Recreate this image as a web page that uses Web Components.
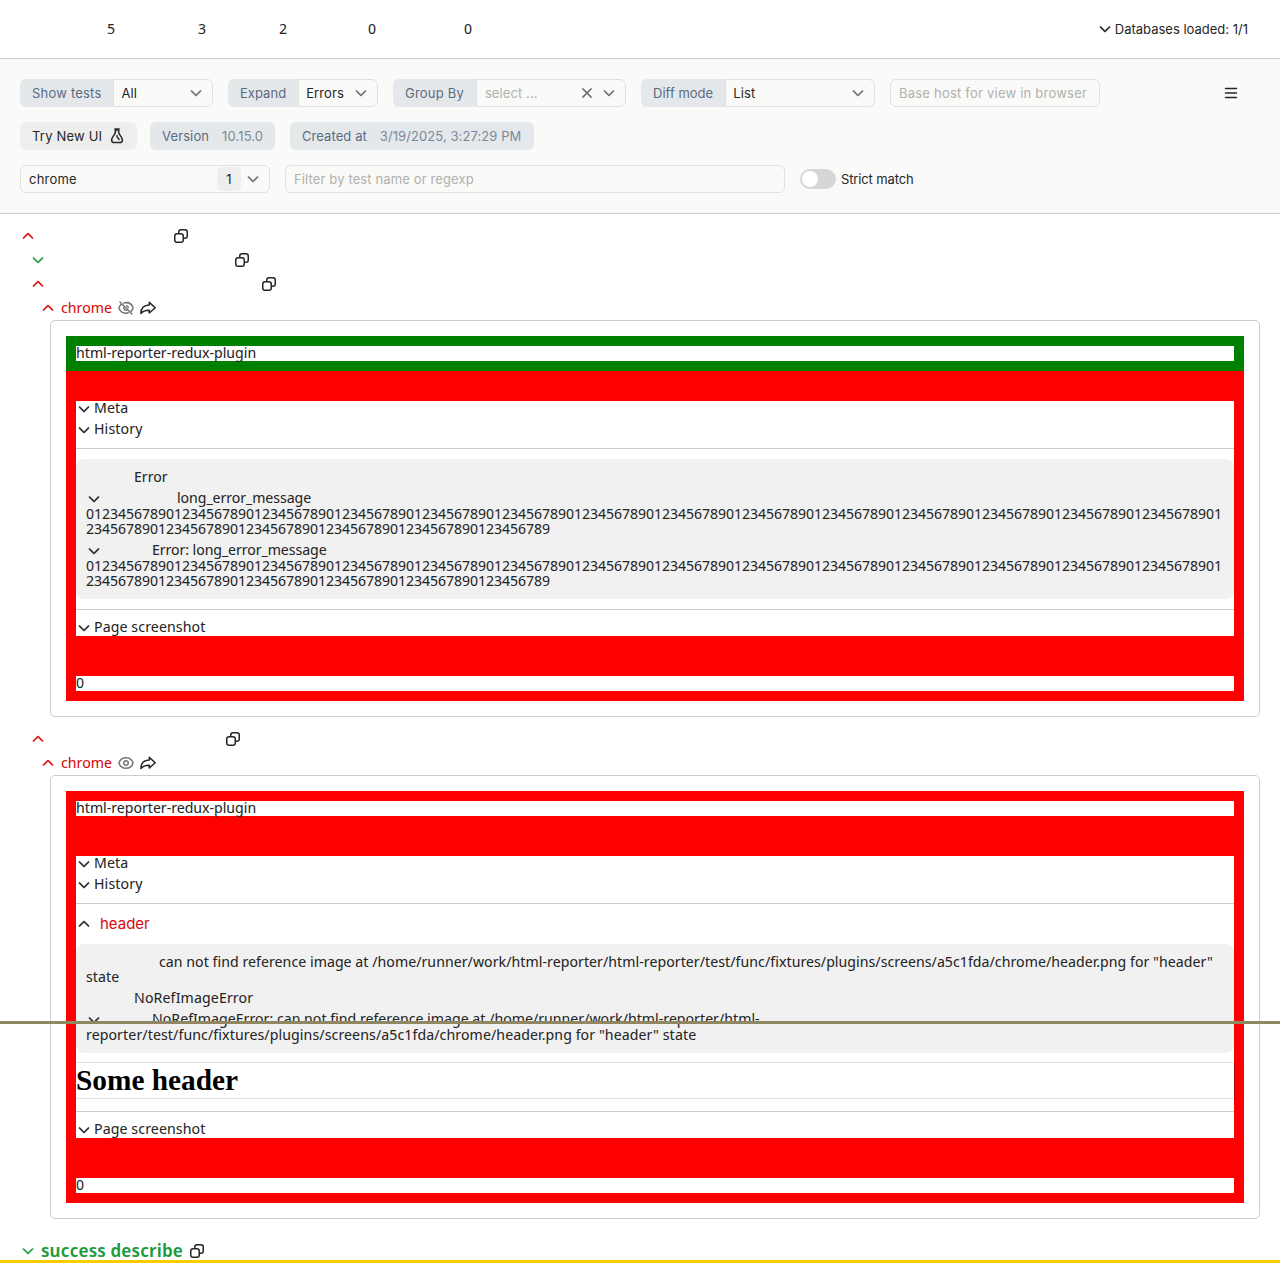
<!DOCTYPE html>
<html lang="en"><head><meta charset="utf-8"><title>HTML report</title>
<style>
body{margin:0;height:1263px;overflow:hidden;background:#fff;color:#262626;font:15px/15px "Noto Sans Display","Noto Sans",sans-serif}
</style></head><body>
<report-app></report-app>
<script>
const ICONS={
 down:'<path fill="currentColor" stroke="currentColor" stroke-width=".2" d="M2.97 5.47a.75.75 0 0 1 1.06 0L8 9.44l3.97-3.97a.75.75 0 1 1 1.06 1.06l-4.5 4.5a.75.75 0 0 1-1.06 0l-4.5-4.5a.75.75 0 0 1 0-1.06"/>',
 up:'<path fill="currentColor" stroke="currentColor" stroke-width=".2" d="M13.03 10.53a.75.75 0 0 1-1.06 0L8 6.56l-3.97 3.97a.75.75 0 0 1-1.06-1.06l4.5-4.5a.75.75 0 0 1 1.06 0l4.5 4.5a.75.75 0 0 1 0 1.06"/>',
 copy:'<path fill="currentColor" fill-rule="evenodd" d="M12 2.5H8A1.5 1.5 0 0 0 6.5 4v1H8a3 3 0 0 1 3 3v1.5h1A1.5 1.5 0 0 0 13.5 8V4A1.5 1.5 0 0 0 12 2.5M11 11h1a3 3 0 0 0 3-3V4a3 3 0 0 0-3-3H8a3 3 0 0 0-3 3v1H4a3 3 0 0 0-3 3v4a3 3 0 0 0 3 3h4a3 3 0 0 0 3-3zM4 6.5h4A1.5 1.5 0 0 1 9.5 8v4A1.5 1.5 0 0 1 8 13.5H4A1.5 1.5 0 0 1 2.5 12V8A1.5 1.5 0 0 1 4 6.5"/>',
 close:'<path fill="none" stroke="currentColor" stroke-width="1.5" stroke-linecap="round" d="M3.9 3.9l8.2 8.2M12.100 3.900l-8.200 8.200"/>',
 bars:'<path fill="none" stroke="currentColor" stroke-width="1.5" stroke-linecap="round" d="M2.500 3.500h11M2.500 8h11M2.500 12.500h11"/>',
 flask:'<path fill="none" stroke="currentColor" stroke-width="1.500" stroke-linecap="round" stroke-linejoin="round" d="M5.900 1.100h4.200M6.300 1.400v3.400C5.700 7 2.600 9.300 2.600 12c0 1.600 1.100 2.600 2.700 2.600h5.400c1.600 0 2.700-1 2.700-2.600 0-2.700-3.100-5-3.700-7.200V1.400"/><path d="M6.300 1.200h3.400v2H6.300z" fill="currentColor" opacity=".75"/><path fill="none" stroke="currentColor" stroke-width="1.400" stroke-linecap="round" stroke-linejoin="round" d="M8 7.400v1.400l2.200 2.700"/>',
 eye:'<path fill="none" stroke="currentColor" stroke-width="1.5" stroke-linejoin="round" d="M.9 8C1.9 4.8 4.6 2.750 8 2.750S14.100 4.800 15.100 8C14.100 11.200 11.400 13.250 8 13.250S1.900 11.200.9 8z"/><circle cx="8" cy="8" r="2.250" fill="none" stroke="currentColor" stroke-width="1.500"/>',
 eyeoff:'<path fill="none" stroke="currentColor" stroke-width="1.5" stroke-linecap="round" stroke-linejoin="round" d="M2 2l12 12M6 3C11 1.7 14 4.5 15.1 8c-.4 1.3-1 2.3-1.900 3.100M10.300 12.800C5.500 14.400 2 11.600.9 8c.4-1.400 1.100-2.500 2.100-3.400M6.200 6.700C5 8.600 6.600 10.900 9 10.100M8.700 5.700c.9.300 1.500 1 1.600 1.900"/>',
 share:'<path fill="none" stroke="currentColor" stroke-width="1.5" stroke-linejoin="round" stroke-linecap="round" d="M9.300 2.400v2.700C4 5.300.9 8 .9 13.600 3 10.900 5.500 10.200 9.300 10.300V13L15.200 7.700z"/>'
};
const define=(name,css,html)=>customElements.define(name,class extends HTMLElement{
 connectedCallback(){
  if(this.shadowRoot)return;
  const root=this.attachShadow({mode:'open'});
  root.innerHTML=`<style>*{box-sizing:border-box}${css}</style>${typeof html==='function'?html(this):html}`;
 }
});
define('ui-icon',':host{display:block;flex:none;width:16px;height:16px}svg{display:block;width:100%;height:100%}',
 e=>`<svg viewBox="0 0 16 16">${ICONS[e.getAttribute('name')]}</svg>`);

define('stat-bar',`:host{display:flex;height:59px;box-sizing:border-box;border-bottom:1px solid #ccc;align-items:center;padding:0 32px 0 107px}
 span{width:8px;margin-top:-2px}.db{margin-left:auto;display:flex;align-items:center;gap:2px;font:13px/18px Inter,sans-serif}`,
 `<span>5</span><span style="margin-left:83px">3</span><span style="margin-left:73px">2</span><span style="margin-left:81px">0</span><span style="margin-left:88px">0</span><div class="db"><ui-icon name="down"></ui-icon><div>Databases loaded: 1/1</div></div>`);

define('labeled-select',`:host{display:flex;height:28px;flex:none}
 .l{background:#e4e8eb;color:#5a6b80;padding:0 12px;line-height:28px;border-radius:6px 0 0 6px;white-space:nowrap}
 .v{flex:1;display:flex;align-items:center;border:1px solid #e0e0df;border-radius:0 6px 6px 0;padding:0 8px 0 7px;white-space:nowrap}
 .v span{flex:1;letter-spacing:.1px}.c{color:#6f6f6e;display:flex;gap:6px}:host([placeholder]) .v{padding-left:8px}:host([placeholder]) span{color:#b0b0ae;letter-spacing:.1px}`,
 e=>`<div class="l">${e.getAttribute('label')}</div><div class="v"><span><slot></slot></span><div class="c">${e.hasAttribute('placeholder')?'<ui-icon name="close"></ui-icon>':''}<ui-icon name="down"></ui-icon></div></div>`);

define('text-box',`:host{display:flex;box-sizing:border-box;height:28px;border:1px solid #e0e0df;border-radius:6px;padding:0 8px;align-items:center;color:#b0b0ae;white-space:nowrap}`,`<slot></slot>`);
define('info-pill',`:host{display:flex;height:28px;border-radius:6px;background:#e4e8eb;color:#5a6b80;align-items:center;padding:0 12px;gap:13px;white-space:nowrap}b{font-weight:400;color:#7b8896}`,e=>`<span>${e.getAttribute('label')}</span><b><slot></slot></b>`);

define('control-panel',`:host{display:flex;flex-direction:column;gap:15px;height:155px;box-sizing:border-box;background:#fafaf8;border-bottom:1px solid #ccc;padding:20px;font:13px/18px Inter,sans-serif;letter-spacing:.2px}
 .r{display:flex;gap:15px;align-items:center;height:28px}
 .menu{margin-left:auto;margin-right:21px}
 .try{display:flex;height:28px;width:117px;background:#eeeeec;border-radius:6px;align-items:center;padding:0 12px;gap:7px;white-space:nowrap}
 .br{display:flex;align-items:center;width:250px;height:28px;border:1px solid #e0e0df;border-radius:6px;padding:0 8px}
 .br i{font-style:normal;margin-left:auto;width:24px;height:24px;background:#eeeeec;border-radius:5px;text-align:center;line-height:24px;margin-right:4px}
 .br ui-icon{color:#6f6f6e}
 .sw{width:36px;height:20px;border-radius:10px;background:#d6d6d4;padding:2px}.sw:before{content:"";display:block;width:16px;height:16px;border-radius:8px;background:#fff}
 .st{display:flex;gap:5px;align-items:center;letter-spacing:-.13px}`,
 `<div class="r"><labeled-select label="Show tests" style="width:193px">All</labeled-select><labeled-select label="Expand" style="width:150px;letter-spacing:.03px">Errors</labeled-select><labeled-select label="Group By" placeholder style="width:233px">select ...</labeled-select><labeled-select label="Diff mode" style="width:234px;letter-spacing:.02px">List</labeled-select><text-box style="width:210px;letter-spacing:.22px">Base host for view in browser</text-box><ui-icon class="menu" name="bars"></ui-icon></div>
 <div class="r"><div class="try"><span>Try New UI</span><ui-icon name="flask"></ui-icon></div><info-pill label="Version" style="margin-left:-2px;width:125px;letter-spacing:.12px">10.15.0</info-pill><info-pill label="Created at" style="width:244px;letter-spacing:.08px">3/19/2025, 3:27:29 PM</info-pill></div>
 <div class="r"><div class="br"><span>chrome</span><i>1</i><ui-icon name="down"></ui-icon></div><text-box style="width:500px;letter-spacing:.13px">Filter by test name or regexp</text-box><div class="st"><div class="sw"></div><span>Strict match</span></div></div>`);

define('tree-row',`:host{display:flex;height:24px;align-items:center;color:#d90808;padding-left:calc(20px + var(--d,0)*10px)}
 :host([ok]){color:#1c9a3c}.a{color:#262626;display:flex;gap:6px}.t{margin:-2px 0 0 5px}`,
 e=>`<ui-icon name="${e.getAttribute('arrow')||'up'}"></ui-icon><div class="t"><slot></slot></div><div class="a"><slot name="actions"></slot></div>`);

define('result-card',`:host{display:block;box-sizing:border-box;margin:0 20px 0 50px;border:1px solid #ccc;border-radius:5px;padding:15px}`,`<slot></slot>`);
define('plugin-frame',`:host{display:block;border:solid var(--c,red);border-width:10px}div{background:#fff}`,`<div><slot></slot></div>`);
define('plain-bar',`:host{display:block;height:15px;line-height:13px;letter-spacing:-.03px;background:#fff}`,`<slot></slot>`);
define('fold-row',`:host{display:flex;height:16px;gap:2px;line-height:13px;letter-spacing:.1px}:host([wide]){gap:8px;align-items:center;letter-spacing:0;font:15px/16px Inter,sans-serif}`,e=>`<ui-icon name="${e.getAttribute('arrow')||'down'}"></ui-icon><div><slot></slot></div>`);
define('rule-line',`:host{display:block;height:1px;background:#ccc}`,``);
define('error-box',`:host{display:flex;flex-direction:column;gap:6px;background:#f1f1f1;border-radius:8px;padding:10px 10px 11px}`,`<slot></slot>`);
define('error-item',`:host{display:block}.i{display:inline-block;height:15px;vertical-align:top}:host([fold]) .i{height:16px}ui-icon{margin-top:1px}`,
 e=>`<span class="i" style="width:${e.getAttribute('indent')}px">${e.hasAttribute('fold')?'<ui-icon name="down"></ui-icon>':''}</span><slot></slot>`);
define('shot-view',`:host{display:flex;height:37px;box-shadow:inset 0 1px #e2e2e2,inset 0 -1px #e2e2e2,1px 0 #d00000;font:bold 29.33px/36px "Liberation Serif",serif;color:#000}`,`<slot></slot>`);

const N='0123456789'.repeat(20);
const digits=`<br><span style="letter-spacing:-.055px">${N.slice(0,142)}<br>${N.slice(142)}</span>`;
const acts=eye=>`<ui-icon slot="actions" name="${eye}" style="color:#777;margin-left:6px"></ui-icon><ui-icon slot="actions" name="share"></ui-icon>`;
const copy=x=>`<ui-icon slot="actions" name="copy" style="margin-left:${x}px"></ui-icon>`;
define('report-app',`:host{display:block;height:1263px;overflow:hidden;position:relative}
 main{display:block;padding-top:10px}
 .stack{display:flex;flex-direction:column;background:#fff}
 .line{position:absolute;left:0;right:0;height:3px}`,
 `<stat-bar></stat-bar><control-panel></control-panel>
 <main>
 <tree-row>${copy(132)}</tree-row>
 <tree-row ok arrow="down" style="--d:1">${copy(183)}</tree-row>
 <tree-row style="--d:1">${copy(210)}</tree-row>
 <tree-row style="--d:2">chrome${acts('eyeoff')}</tree-row>
 <result-card>
  <plugin-frame style="--c:green"><plain-bar>html-reporter-redux-plugin</plain-bar></plugin-frame>
  <plugin-frame style="border-top-width:30px;border-bottom-width:40px"><div class="stack">
   <fold-row>Meta</fold-row><fold-row style="margin-top:5px">History</fold-row>
   <rule-line style="margin:10px 0"></rule-line>
   <error-box><error-item indent="48" style="height:15px">Error</error-item><error-item fold indent="91" style="letter-spacing:-.07px">long_error_message${digits}</error-item><error-item fold indent="66" style="letter-spacing:-.08px">Error: long_error_message${digits}</error-item></error-box>
   <rule-line style="margin:10px 0"></rule-line><fold-row>Page screenshot</fold-row></div></plugin-frame>
  <plugin-frame style="border-top-width:0"><plain-bar>0</plain-bar></plugin-frame>
 </result-card>
 <tree-row style="--d:1;margin-top:10px">${copy(174)}</tree-row>
 <tree-row style="--d:2">chrome${acts('eye')}</tree-row>
 <result-card>
  <plugin-frame><plain-bar>html-reporter-redux-plugin</plain-bar></plugin-frame>
  <plugin-frame style="border-top-width:30px;border-bottom-width:40px"><div class="stack">
   <fold-row>Meta</fold-row><fold-row style="margin-top:5px">History</fold-row>
   <rule-line style="margin:10px 0 12px"></rule-line>
   <fold-row wide arrow="up"><span style="color:#d90808">header</span></fold-row>
   <error-box style="margin-top:12px"><error-item indent="73" style="height:30px;letter-spacing:.03px">can not find reference image at /home/runner/work/html-reporter/html-reporter/test/func/fixtures/plugins/screens/a5c1fda/chrome/header.png for "header"<br>state</error-item><error-item indent="48" style="height:15px;letter-spacing:.12px">NoRefImageError</error-item><error-item fold indent="66">NoRefImageError: can not find reference image at /home/runner/work/html-reporter/html-<br><span style="letter-spacing:.08px">reporter/test/func/fixtures/plugins/screens/a5c1fda/chrome/header.png for "header" state</span></error-item></error-box>
   <shot-view style="margin-top:9px">Some header</shot-view>
   <rule-line style="margin:12px 0 10px"></rule-line><fold-row>Page screenshot</fold-row></div></plugin-frame>
  <plugin-frame style="border-top-width:0"><plain-bar>0</plain-bar></plugin-frame>
 </result-card>
 <tree-row ok arrow="down" style="margin-top:20px;font-size:18px;font-weight:600;letter-spacing:.2px">success describe${copy(6)}</tree-row>
 </main>
 <div class="line" style="top:1021px;background:#918763"></div><div class="line" style="bottom:0;background:#fc0"></div>`);
</script></body></html>
